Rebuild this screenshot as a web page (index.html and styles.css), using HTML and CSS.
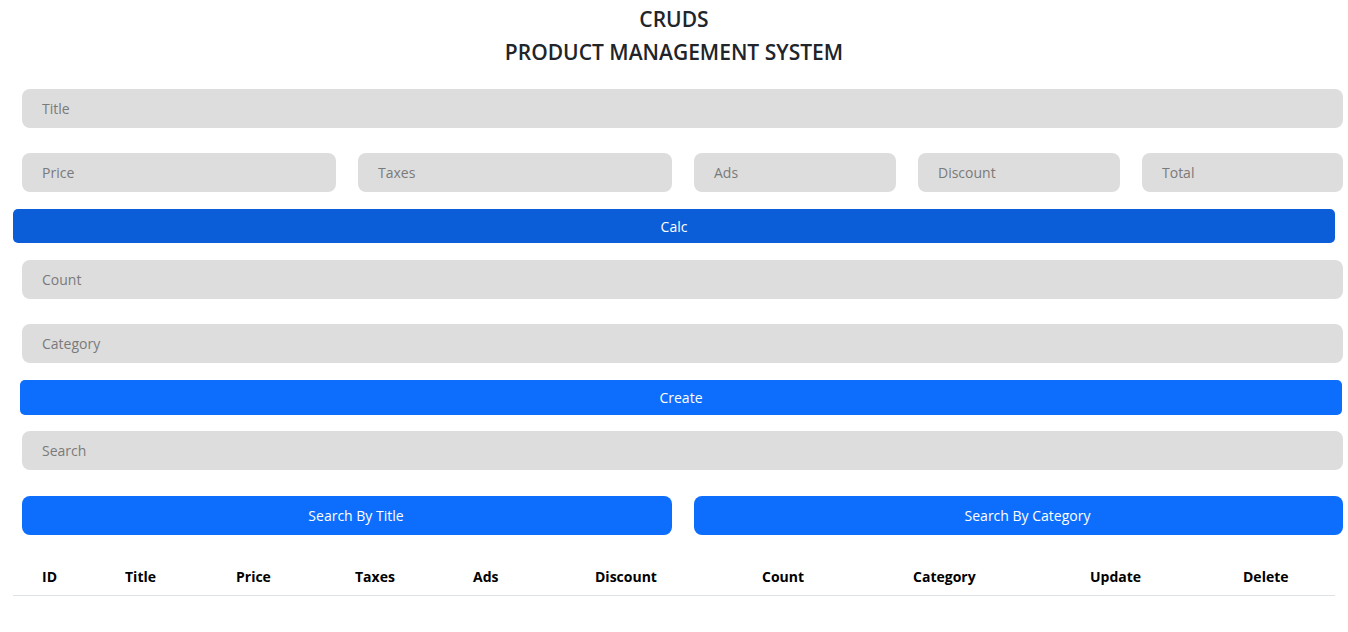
FILE: index.html
```html
<!DOCTYPE html>
<html>
<head>
<meta charset="utf-8">
<link rel="stylesheet" href="styles.css">
</head>
<body>
<div class="page">
  <header class="head">
    <h2>CRUDS</h2>
    <h2>PRODUCT MANAGEMENT SYSTEM</h2>
  </header>
  <div class="inputs">
    <input class="field" type="text" placeholder="Title">
    <div class="price-row">
      <input class="field wide" type="text" placeholder="Price">
      <input class="field wide" type="text" placeholder="Taxes">
      <input class="field" type="text" placeholder="Ads">
      <input class="field" type="text" placeholder="Discount">
      <input class="field" type="text" placeholder="Total">
    </div>
  </div>
  <button class="btn btn-calc">Calc</button>
  <div class="inputs">
    <input class="field" type="text" placeholder="Count">
    <input class="field" type="text" placeholder="Category">
  </div>
  <button class="btn btn-create">Create</button>
  <div class="search">
    <input class="field" type="text" placeholder="Search">
    <div class="search-btns">
      <button class="btn btn-search">Search By Title</button>
      <button class="btn btn-search">Search By Category</button>
    </div>
  </div>
  <table class="tbl">
    <colgroup>
      <col style="width:83px"><col style="width:111px"><col style="width:119px"><col style="width:118px"><col style="width:122px"><col style="width:167px"><col style="width:151px"><col style="width:177px"><col style="width:153px"><col style="width:121px">
    </colgroup>
    <thead>
      <tr>
        <th>ID</th><th>Title</th><th>Price</th><th>Taxes</th><th>Ads</th><th>Discount</th><th>Count</th><th>Category</th><th>Update</th><th>Delete</th>
      </tr>
    </thead>
    <tbody></tbody>
  </table>
</div>
</body>
</html>
```

FILE: styles.css
```css
* { box-sizing: border-box; }
html, body { margin: 0; padding: 0; background: #fff; }
body {
  font-family: "Open Sans", "Noto Sans", sans-serif;
  font-size: 14px;
  color: #212529;
}
.page {
  width: 1348px;
  display: flex;
  flex-direction: column;
}
.head {
  text-align: center;
  padding-top: 3px;
}
.head h2 {
  margin: 0;
  font-size: 21px;
  font-weight: 600;
  line-height: 33px;
  color: #212529;
}
.inputs {
  display: flex;
  flex-direction: column;
  gap: 25px;
  margin: 20px 0 0 22px;
  width: 1321px;
}
.field {
  display: block;
  width: 100%;
  height: 39px;
  border: none;
  outline: none;
  border-radius: 8px;
  background: #dddddd;
  padding: 0 20px;
  font-family: inherit;
  font-size: 14px;
  color: #333;
}
.field::placeholder { color: #7a7a7a; }
.price-row {
  display: grid;
  grid-template-columns: 314px 314px 202px 202px 201px;
  gap: 22px;
}
.btn {
  display: block;
  border: none;
  color: #fff;
  font-family: inherit;
  font-size: 14px;
  cursor: pointer;
}
.btn-calc {
  margin: 17px 0 0 13px;
  width: 1322px;
  height: 34px;
  border-radius: 5px;
  background: #0b5ed7;
}
.btn-calc + .inputs { margin-top: 17px; }
.btn-create {
  margin: 17px 0 0 20px;
  width: 1322px;
  height: 35px;
  border-radius: 5px;
  background: #0d6efd;
}
.search {
  margin: 16px 0 0 22px;
  width: 1321px;
  display: flex;
  flex-direction: column;
  gap: 26px;
}
.search-btns {
  display: grid;
  grid-template-columns: 650px 649px;
  gap: 22px;
}
.btn-search {
  height: 39px;
  border-radius: 8px;
  background: #0d6efd;
  width: 100%;
  padding: 0 0 0 18px;
}
.tbl {
  margin: 25px 0 0 13px;
  width: 1322px;
  border-collapse: collapse;
  table-layout: fixed;
}
.tbl th {
  text-align: left;
  padding: 0 0 1px 29px;
  height: 35px;
  font-weight: 700;
  font-size: 14px;
  color: #000;
  border-bottom: 1px solid #dee2e6;
}
```
